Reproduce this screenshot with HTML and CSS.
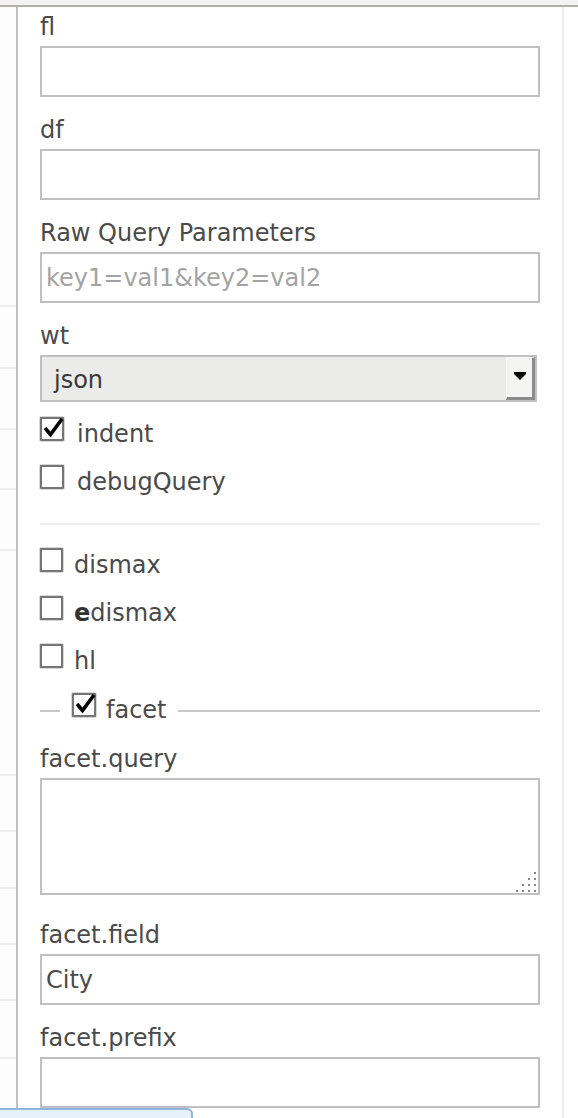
FILE: index.html
```html
<!DOCTYPE html>
<html>
<head>
<meta charset="utf-8">
<link rel="stylesheet" href="styles.css">
</head>
<body>
<div class="topbar"></div>
<div class="main">
  <div class="side">
    <div class="srow"></div><div class="srow"></div><div class="srow"></div><div class="srow"></div>
    <div class="srow"></div><div class="srow"></div><div class="srow"></div><div class="srow"></div>
    <div class="srow"></div><div class="srow"></div><div class="srow"></div><div class="slast"></div>
  </div>
  <div class="form">
    <label class="lbl">fl</label>
    <input class="txt" type="text">
    <label class="lbl">df</label>
    <input class="txt" type="text">
    <label class="lbl">Raw Query Parameters</label>
    <input class="txt" type="text" placeholder="key1=val1&amp;key2=val2">
    <label class="lbl">wt</label>
    <div class="select">
      <span class="sval">json</span>
      <span class="sbtn"><svg width="14" height="9" viewBox="0 0 14 9"><polygon points="1,0 13,0 13,2 7,8 1,2" fill="#000"/></svg></span>
    </div>
    <div class="chk first">
      <span class="box"><svg width="24" height="24" viewBox="0 0 24 24"><polyline points="4,11 9.5,17.5 21,2" fill="none" stroke="#000" stroke-width="3.6"/></svg></span>
      <span class="ctext">indent</span>
    </div>
    <div class="chk">
      <span class="box"></span>
      <span class="ctext">debugQuery</span>
    </div>
    <div class="sep"></div>
    <div class="chk tight">
      <span class="box"></span>
      <span class="ctext">dismax</span>
    </div>
    <div class="chk tight">
      <span class="box"></span>
      <span class="ctext"><b>e</b>dismax</span>
    </div>
    <div class="chk tight">
      <span class="box"></span>
      <span class="ctext">hl</span>
    </div>
    <div class="legend">
      <span class="lline short"></span>
      <span class="lgroup">
        <span class="box"><svg width="24" height="24" viewBox="0 0 24 24"><polyline points="4,11 9.5,17.5 21,2" fill="none" stroke="#000" stroke-width="3.6"/></svg></span>
        <span class="ctext">facet</span>
      </span>
      <span class="lline long"></span>
    </div>
    <label class="lbl">facet.query</label>
    <div class="tawrap">
      <textarea class="ta"></textarea>
      <svg class="grip" width="21" height="21" viewBox="0 0 21 21">
        <rect x="18" y="0" width="2" height="2" fill="#888"/>
        <rect x="12" y="6" width="2" height="2" fill="#888"/>
        <rect x="18" y="6" width="2" height="2" fill="#888"/>
        <rect x="6" y="12" width="2" height="2" fill="#888"/>
        <rect x="12" y="12" width="2" height="2" fill="#888"/>
        <rect x="18" y="12" width="2" height="2" fill="#888"/>
        <rect x="0" y="18" width="2" height="2" fill="#888"/>
        <rect x="6" y="18" width="2" height="2" fill="#888"/>
        <rect x="12" y="18" width="2" height="2" fill="#888"/>
        <rect x="18" y="18" width="2" height="2" fill="#888"/>
      </svg>
    </div>
    <label class="lbl">facet.field</label>
    <input class="txt" type="text" value="City">
    <label class="lbl">facet.prefix</label>
    <input class="txt" type="text">
  </div>
  <div class="gutter"></div>
</div>
<div class="tab"></div>
</body>
</html>
```
FILE: styles.css
```css
html, body {
  margin: 0;
  padding: 0;
  background: #fff;
}
body {
  height: 1118px;
  overflow: hidden;
  font-family: "DejaVu Sans", Verdana, sans-serif;
  font-size: 24px;
  color: #4a4a4a;
}
.topbar {
  height: 5px;
  background: #f3f3f1;
  border-bottom: 2px solid #b2aeaa;
}
.main {
  display: flex;
  height: 1111px;
}
.side {
  width: 16px;
  border-right: 2px solid #c0c0c0;
  display: grid;
  grid-template-rows: 300px 62px 61px 60px 61px 225px 56px 57px 56px 56px 58px 1fr;
  background: #fcfcfc;
}
.srow {
  box-sizing: border-box;
  border-bottom: 2px solid #eeeeee;
}
.form {
  width: 500px;
  padding: 6px 22px 0 22px;
}
.gutter {
  width: 14px;
  border-left: 2px solid #eeeeee;
}
.lbl {
  display: block;
  height: 28px;
  line-height: 28px;
  margin-bottom: 5px;
  color: #4a4a4a;
  white-space: nowrap;
}
.txt {
  display: block;
  box-sizing: border-box;
  width: 500px;
  height: 51px;
  margin: 0 0 19px 0;
  padding: 0 4px;
  border: 2px solid #c0c0c0;
  border-radius: 0;
  outline: none;
  background: #fff;
  font-family: "DejaVu Sans", Verdana, sans-serif;
  font-size: 24px;
  color: #4a4a4a;
}
.txt::placeholder {
  color: #a3a3a3;
}
.select {
  box-sizing: border-box;
  width: 497px;
  height: 47px;
  border: 2px solid #c0c0c0;
  background: #ebebea;
  display: flex;
  align-items: center;
}
.sval {
  flex: 1;
  padding-left: 12px;
  padding-top: 2px;
  color: #3a3a3a;
}
.sbtn {
  box-sizing: border-box;
  width: 29px;
  height: 43px;
  background: #f4f4f3;
  border-top: 1px solid #fbfbfb;
  border-left: 1px solid #fbfbfb;
  border-right: 3px solid #8c8c8c;
  border-bottom: 3px solid #8c8c8c;
  display: flex;
  align-items: center;
  justify-content: center;
}
.sbtn svg {
  display: block;
  margin-bottom: 3px;
}
.chk {
  display: flex;
  align-items: center;
  height: 48px;
}
.chk.first {
  margin-top: 3px;
}
.box {
  box-sizing: border-box;
  flex: none;
  width: 24px;
  height: 24px;
  border: 2px solid #757575;
  box-shadow: 0 0 0 1px #d8d8d8;
  border-radius: 1px;
  background: #fff;
  position: relative;
  overflow: visible;
}
.box svg {
  position: absolute;
  left: -1px;
  top: -2px;
}
.ctext {
  margin-left: 13px;
  margin-top: 10px;
  line-height: 28px;
  color: #4a4a4a;
}
.chk.tight .box {
  width: 23px;
}
.chk.tight .ctext {
  margin-left: 11px;
}
.ctext b {
  color: #333;
}
.sep {
  height: 0;
  border-top: 2px solid #eeeeee;
  margin: 22px 0 11px 0;
}
.legend {
  display: flex;
  align-items: center;
  height: 28px;
  margin: 17px 0 20px 0;
}
.lline {
  height: 0;
  border-top: 2px solid #c8c8c8;
}
.lline.short {
  width: 20px;
}
.lline.long {
  flex: 1;
}
.lgroup {
  display: flex;
  align-items: center;
  padding: 0 11px 0 12px;
  margin-bottom: 12px;
}
.lgroup .ctext {
  margin-left: 10px;
}
.tawrap {
  position: relative;
  width: 500px;
  height: 117px;
  margin-bottom: 26px;
}
.ta {
  display: block;
  box-sizing: border-box;
  width: 500px;
  height: 117px;
  margin: 0;
  border: 2px solid #c0c0c0;
  border-radius: 0;
  resize: none;
  outline: none;
  background: #fff;
}
.grip {
  position: absolute;
  right: 3px;
  bottom: 2px;
}
.tab {
  position: fixed;
  left: 0;
  bottom: 0;
  box-sizing: border-box;
  width: 193px;
  height: 10px;
  background: #e7f1fb;
  border-top: 2px solid #8db4df;
  border-right: 2px solid #8db4df;
  border-top-right-radius: 6px;
}
```
